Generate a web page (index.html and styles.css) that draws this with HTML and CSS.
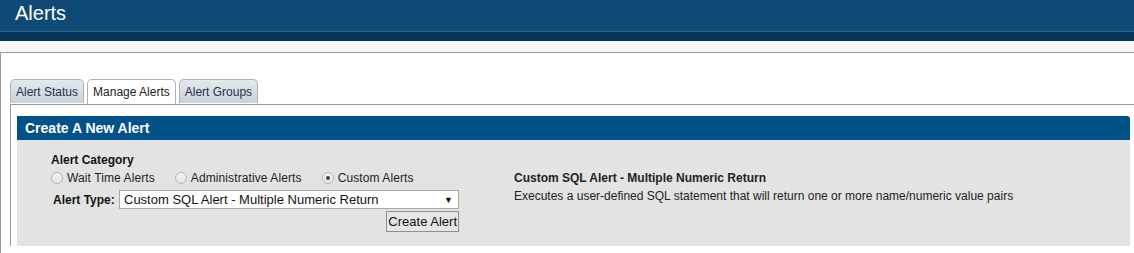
FILE: index.html
```html
<!DOCTYPE html>
<html lang="en">
<head>
  <meta charset="UTF-8">
  <title>Alerts</title>
  <link rel="stylesheet" href="styles.css">
</head>
<body>
  <header class="topbar">
    <h1 class="page-title">Alerts</h1>
  </header>
  <div class="subbar"></div>
  <div class="strip"></div>

  <section class="page">
    <ul class="tabs">
      <li class="tab">Alert Status</li>
      <li class="tab active">Manage Alerts</li>
      <li class="tab">Alert Groups</li>
    </ul>

    <div class="tab-panel">
      <h2 class="box-title">Create A New Alert</h2>
      <div class="box-body">
        <form class="alert-form">
          <div class="field-label">Alert Category</div>
          <div class="radio-row">
            <label class="radio"><input type="radio" name="cat"> Wait Time Alerts</label>
            <label class="radio"><input type="radio" name="cat"> Administrative Alerts</label>
            <label class="radio"><input type="radio" name="cat" checked> Custom Alerts</label>
          </div>
          <div class="type-row">
            <span class="type-label">Alert Type:</span>
            <div class="select">
              <span>Custom SQL Alert - Multiple Numeric Return</span>
              <span class="arrow">&#9660;</span>
            </div>
          </div>
          <div class="actions">
            <button type="button" class="btn">Create Alert</button>
          </div>
        </form>

        <div class="alert-info">
          <div class="info-title">Custom SQL Alert - Multiple Numeric Return</div>
          <div class="info-desc">Executes a user-defined SQL statement that will return one or more name/numeric value pairs</div>
        </div>
      </div>
    </div>
  </section>
</body>
</html>
```

FILE: styles.css
```css
body {
  margin: 0;
  font-family: 'Liberation Sans', Arial, sans-serif;
  font-size: 12px;
  color: #111;
  background: #fff;
}

/* header bands */
.topbar {
  height: 31px;
  background: #0e4a75;
  border-bottom: 1px solid #2b6590;
}
.page-title {
  margin: 0;
  padding: 1px 0 0 15px;
  font-size: 20px;
  font-weight: normal;
  line-height: 24px;
  color: #fff;
}
.subbar {
  height: 9px;
  background: #04345a;
}
.strip {
  height: 11px;
  background: #f7f7f7;
}

.page {
  border-top: 1px solid #9a9a9a;
  border-left: 1px solid #9a9a9a;
  padding: 26px 0 8px 9px;
}

/* tabs */
.tabs {
  list-style: none;
  margin: 0;
  padding: 0;
  display: flex;
  gap: 3px;
  position: relative;
  z-index: 1;
}
.tab {
  height: 23px;
  line-height: 24px;
  padding: 0 5px;
  border: 1px solid #a9b1ba;
  border-bottom: none;
  border-radius: 5px 5px 0 0;
  background: linear-gradient(to bottom, #e3e9ee 0%, #c9d3db 100%);
  color: #2a2f4a;
  font-size: 12px;
}
.tab.active {
  height: 24px;
  background: #fff;
  color: #222;
}

.tab-panel {
  border-top: 1px solid #9a9a9a;
  border-left: 1px solid #9a9a9a;
  padding: 11px 4px 0 6px;
}

.box-title {
  margin: 0;
  height: 24px;
  line-height: 24px;
  padding-left: 8px;
  background: #02518a;
  border-radius: 0 3px 0 0;
  color: #fff;
  font-size: 14px;
  font-weight: bold;
}
.box-body {
  height: 106px;
  background: #e3e3e3;
  display: flex;
  padding-left: 34px;
}

.alert-form {
  width: 408px;
  padding-top: 13px;
}
.field-label {
  font-weight: bold;
  line-height: 14px;
}
.radio-row {
  display: flex;
  height: 20px;
  padding-top: 2px;
  box-sizing: border-box;
  align-items: center;
  color: #222;
}
.radio {
  display: flex;
  align-items: center;
  margin-right: 20px;
  letter-spacing: 0.1px;
}
.radio input {
  appearance: none;
  margin: 0 4px 0 0;
  width: 12px;
  height: 12px;
  border: 1px solid #b4b4b4;
  border-radius: 50%;
  background: linear-gradient(to bottom, #f2f2f2, #e6e6e6);
  display: grid;
  place-items: center;
}
.radio input:checked::after {
  content: "";
  width: 4px;
  height: 4px;
  border-radius: 50%;
  background: #444;
}

.type-row {
  display: flex;
  align-items: center;
  margin-top: 3px;
}
.type-label {
  font-weight: bold;
  padding-left: 2px;
  width: 66px;
}
.select {
  flex: 1;
  height: 17px;
  border: 1px solid #a9a9a9;
  background: #fff;
  display: flex;
  align-items: center;
  justify-content: space-between;
  padding: 0 5px 0 4px;
  font-size: 13px;
  color: #111;
}
.select .arrow {
  font-size: 9px;
}
.actions {
  display: flex;
  justify-content: flex-end;
  margin-top: 2px;
}
.btn {
  font-family: inherit;
  font-size: 13px;
  height: 21px;
  padding: 0 1px;
  border: 1px solid #8f8f8f;
  background: #e6e6e6;
  color: #111;
  border-radius: 0;
}

.alert-info {
  margin-left: 55px;
  padding-top: 31px;
}
.info-title {
  font-weight: bold;
  line-height: 14px;
  color: #222;
}
.info-desc {
  margin-top: 4px;
  color: #222;
}
```
